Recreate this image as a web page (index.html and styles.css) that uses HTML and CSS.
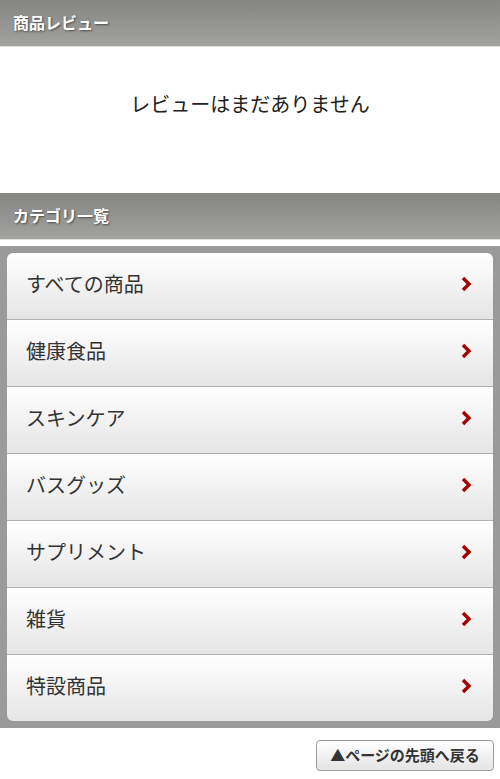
FILE: index.html
```html
<!DOCTYPE html>
<html lang="ja">
<head>
  <meta charset="UTF-8" />
  <meta name="viewport" content="width=device-width, initial-scale=1.0"/>
  <title>商品レビュー</title>
  <link rel="stylesheet" href="styles.css">
</head>
<body>
  <h2 class="bar">商品レビュー</h2>
  <div class="review">
    <p>レビューはまだありません</p>
  </div>

  <h2 class="bar">カテゴリ一覧</h2>
  <div class="cats">
    <ul>
      <li><a href="#">すべての商品<svg class="arr" viewBox="0 0 12 16"><polyline points="3,2 9,8 3,14"/></svg></a></li>
      <li><a href="#">健康食品<svg class="arr" viewBox="0 0 12 16"><polyline points="3,2 9,8 3,14"/></svg></a></li>
      <li><a href="#">スキンケア<svg class="arr" viewBox="0 0 12 16"><polyline points="3,2 9,8 3,14"/></svg></a></li>
      <li><a href="#">バスグッズ<svg class="arr" viewBox="0 0 12 16"><polyline points="3,2 9,8 3,14"/></svg></a></li>
      <li><a href="#">サプリメント<svg class="arr" viewBox="0 0 12 16"><polyline points="3,2 9,8 3,14"/></svg></a></li>
      <li><a href="#">雑貨<svg class="arr" viewBox="0 0 12 16"><polyline points="3,2 9,8 3,14"/></svg></a></li>
      <li><a href="#">特設商品<svg class="arr" viewBox="0 0 12 16"><polyline points="3,2 9,8 3,14"/></svg></a></li>
    </ul>
  </div>

  <div class="totop">
    <a href="#">▲ページの先頭へ戻る</a>
  </div>
</body>
</html>
```

FILE: styles.css
```css
body {
  margin: 0;
  font-family: "Noto Sans CJK JP", "Noto Sans", sans-serif;
  background: white;
  color: #333;
}
.bar {
  margin: 0;
  height: 46px;
  line-height: 44px;
  padding-left: 13px;
  font-size: 16px;
  font-weight: bold;
  color: white;
  text-shadow: 1px 1px 2px rgba(0, 0, 0, 0.5);
  background: linear-gradient(#858684, #a2a3a1);
  border-bottom: 1px solid #dedede;
}
.review {
  height: 146px;
  display: flex;
  align-items: center;
  justify-content: center;
}
.review p {
  margin: 0 0 34px;
  font-size: 20px;
  color: #222;
}
.cats {
  margin-top: 6px;
  background: #9a9a9a;
  padding: 7px;
}
.cats ul {
  list-style: none;
  margin: 0;
  padding: 0;
  border-radius: 6px;
  overflow: hidden;
}
.cats li {
  border-top: 1px solid #b0b0b0;
}
.cats li:first-child {
  border-top: none;
}
.cats a {
  box-sizing: border-box;
  display: flex;
  align-items: center;
  justify-content: space-between;
  height: 66px;
  padding: 0 21px 5px 19px;
  font-size: 20px;
  color: #333;
  text-decoration: none;
  background: linear-gradient(#ffffff, #e5e5e5);
}
.arr {
  width: 12px;
  height: 16px;
  fill: none;
  stroke: #a50000;
  stroke-width: 3.4;
}
.totop {
  display: flex;
  justify-content: flex-end;
  padding: 12px 6px 0;
}
.totop a {
  display: block;
  width: 176px;
  height: 29px;
  line-height: 28px;
  text-align: center;
  font-size: 15px;
  font-weight: bold;
  color: #333;
  text-decoration: none;
  border: 1px solid #9c9c9c;
  border-radius: 4px;
  background: linear-gradient(#ffffff, #e4e4e4);
}
```
